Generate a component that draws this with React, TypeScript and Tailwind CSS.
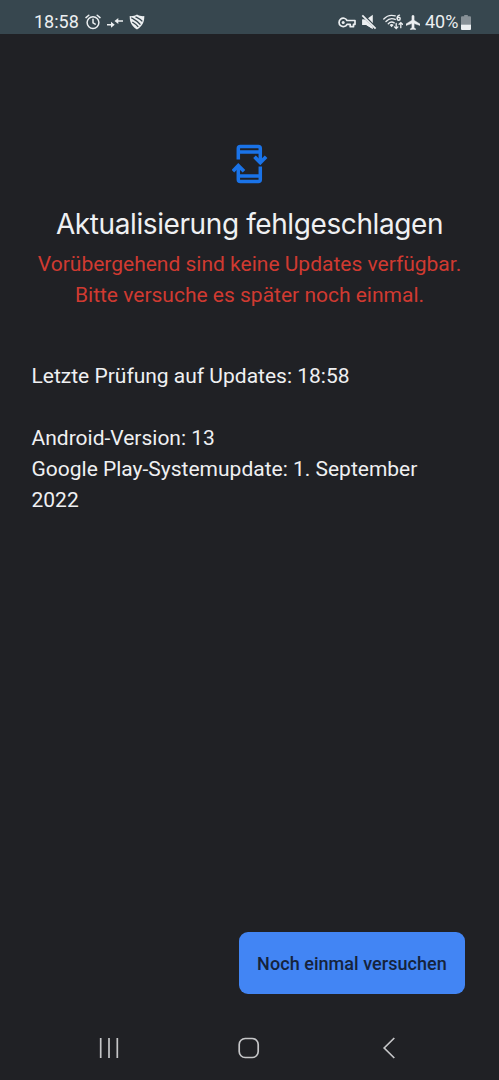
import React from 'react';

const AlarmIcon = () => (
  <svg className="h-4 w-4" viewBox="0 0 16 16" fill="none" stroke="currentColor" strokeWidth="1.5" strokeLinecap="round">
    <circle cx="8" cy="8.6" r="5.900" />
    <path d="M8 5.200v3.600l2.200 1.400M1 3.600 3.800 1.200M15 3.600l-2.800-2.400" />
  </svg>
);

const ArrowsIcon = () => (
  <svg className="h-4 w-4" viewBox="0 0 16 16" fill="currentColor">
    <path d="M0 9.900h4V7.700l3.700 3-3.700 3v-2.200H0zM16 6.200h-4.700V4L7.500 7l3.800 3V7.800H16z" />
  </svg>
);

const ShieldIcon = () => (
  <svg className="h-4 w-4" viewBox="0 0 16 16" fill="none">
    <path d="M8 .5c2 1.3 4.6 1.8 7.3 1.6.1 5.9-1.8 10.300-7.3 13.400C2.500 12.400.6 8 .7 2.100 3.400 2.300 6 1.800 8 .5z" fill="currentColor" />
    <path d="M2.200 3.700c3.400 2.100 6.400 2.900 9.200 7M3.300 8c2.300 1.400 4.100 2.300 5.900 4.800M6.500 2.800c2.500 1.300 5 2 6.800 4.500" stroke="#37474f" strokeWidth="1.300" />
  </svg>
);

const KeyIcon = () => (
  <svg className="h-[11px] w-[18px]" viewBox="0 0 18 11" fill="none" stroke="currentColor" strokeWidth="1.7" strokeLinejoin="round">
    <path d="M9 3.500h8v3.800h-1.500v2.400h-3.300V7.300H9A4.200 4.200 0 1 1 9 3.500z" />
    <circle cx="5.200" cy="5.400" r="1.500" fill="currentColor" stroke="none" />
  </svg>
);

const MuteIcon = () => (
  <svg className="h-4 w-4" viewBox="0 0 16 16">
    <path d="M1.300 5.400h4L11.800.8v14.200L5.300 11h-4z" fill="currentColor" />
    <path d="M1 1 15 15" stroke="#37474f" strokeWidth="4" />
    <path d="M1.300 1.300 14.600 14.600" stroke="currentColor" strokeWidth="1.800" />
    <path d="M1.300 5.400h2.800l7.700 7.700V15L5.300 11h-4z" fill="currentColor" />
  </svg>
);

const WifiIcon = () => (
  <svg className="h-4 w-5" viewBox="0 0 20 16" fill="none" stroke="currentColor" strokeWidth="1.4" strokeLinecap="round">
    <path d="M.8 5C3.800 1.800 8.200.7 12.200 1.900M3 7.400c2.500-2.600 6.200-3.300 9.200-2M5.300 9.700c1.600-1.600 4-2 5.900-.9" />
    <path d="M6.600 10.900a3 3 0 0 1 4 0l-2 2.300z" fill="currentColor" stroke="none" />
    <path d="M16.500 1.100c-1.500.3-2.300 1.600-2.300 3.100" />
    <circle cx="15.700" cy="4.700" r="1.500" />
    <path d="M13.200 9.400v5M11.500 12.900l1.700 1.700 1.700-1.700M17.800 13.700V8.900M16.100 10.300l1.700-1.700 1.700 1.700" strokeWidth="1.300" />
  </svg>
);

const PlaneIcon = () => (
  <svg className="h-[15px] w-[14px]" viewBox="2 2 19 20" fill="currentColor" stroke="currentColor" strokeWidth=".6">
    <path d="M21 16v-2l-8-5V3.500c0-.83-.67-1.500-1.500-1.500S10 2.670 10 3.500V9l-8 5v2l8-2.500V19l-2 1.500V22l3.500-1 3.500 1v-1.500L13 19v-5.500l8 2.500z" />
  </svg>
);

const BatteryIcon = () => (
  <svg className="h-[15px] w-[10px]" viewBox="0 0 10 15">
    <path d="M3.200 0h3.600v1.300H9a1 1 0 0 1 1 1V9.500H0V2.300a1 1 0 0 1 1-1h2.200z" fill="#879096" />
    <path d="M0 9.500h10V14a1 1 0 0 1-1 1H1a1 1 0 0 1-1-1z" fill="currentColor" />
  </svg>
);

const UpdateIcon = () => (
  <svg className="h-10 w-9" viewBox="0 0 36 40" fill="none" stroke="#1a73e8" strokeWidth="3.5">
    <path d="M6.300 15.600V4.500a2 2 0 0 1 2-2h18a2 2 0 0 1 2 2v14M6.300 8.100h22" />
    <path d="M28.300 22.600v13a2 2 0 0 1-2 2h-18a2 2 0 0 1-2-2V22M6.300 32h22" />
    <path d="m22.500 12.800 5.800 5.800 5.800-5.800M.9 27.200l5.400-5.600 5.700 5.600" strokeWidth="3.700" />
  </svg>
);

const StatusBar = () => (
  <header className="flex h-[34px] items-center justify-between bg-[#37474f] pl-[34px] pr-[28px] pt-[10px] text-[#eceff1]">
    <div className="flex items-center">
      <span className="w-[51px] text-[18px] leading-6">18:58</span>
      <AlarmIcon />
      <span className="ml-[6px]"><ArrowsIcon /></span>
      <span className="ml-[6px]"><ShieldIcon /></span>
    </div>
    <div className="flex items-center">
      <KeyIcon />
      <span className="ml-[5px]"><MuteIcon /></span>
      <span className="ml-[6px]"><WifiIcon /></span>
      <span className="ml-[3px]"><PlaneIcon /></span>
      <span className="ml-[5px] w-[36px] text-[18px] leading-6">40%</span>
      <BatteryIcon />
    </div>
  </header>
);

const NavBar = () => (
  <nav className="flex h-16 items-center pl-[98px] text-[#c5c6c8]">
    <svg className="h-[22px] w-[22px]" viewBox="0 0 22 22" stroke="currentColor" strokeWidth="1.7">
      <path d="M2.700 1v20M11 1v20M19.300 1v20" />
    </svg>
    <svg className="ml-[118px] h-[22px] w-[22px]" viewBox="0 0 22 22" fill="none" stroke="currentColor" strokeWidth="1.7">
      <rect x="1.200" y="1.500" width="19" height="19" rx="6" />
    </svg>
    <svg className="ml-[122px] h-[22px] w-[14px]" viewBox="0 0 14 22" fill="none" stroke="currentColor" strokeWidth="1.7">
      <path d="M12.300 1 2.200 11l10.100 10" />
    </svg>
  </nav>
);

export default function App() {
  return (
    <div className="flex h-screen w-full flex-col overflow-hidden bg-[#202125] font-['Roboto',sans-serif] text-[#eff0f2]">
      <StatusBar />
      <main className="flex flex-1 flex-col px-8 pt-[110px]">
        <div className="flex justify-center">
          <UpdateIcon />
        </div>
        <h1 className="mt-[20px] whitespace-nowrap text-center font-['Inter',sans-serif] text-[28px] leading-10 tracking-[-0.4px]">
          Aktualisierung fehlgeschlagen
        </h1>
        <p className="-mx-4 mt-[5px] text-center text-[21px] leading-[31px] text-[#d03a31]">
          Vorübergehend sind keine Updates verfügbar.
          <br />
          Bitte versuche es später noch einmal.
        </p>
        <div className="-ml-[0.5px] mt-[50px] text-[21px] leading-[31px]">
          <p>Letzte Prüfung auf Updates: 18:58</p>
          <p className="mt-[31px]">Android-Version: 13</p>
          <p>
            Google Play-Systemupdate: 1. September
            <br />
            2022
          </p>
        </div>
      </main>
      <div className="mb-[22px] flex justify-end pr-[34px]">
        <button className="h-[62px] w-[226px] whitespace-nowrap rounded-[9px] bg-[#4285f4] text-[18px] font-medium tracking-[0.05px] text-[#15233c]">
          Noch einmal versuchen
        </button>
      </div>
      <NavBar />
    </div>
  );
}
